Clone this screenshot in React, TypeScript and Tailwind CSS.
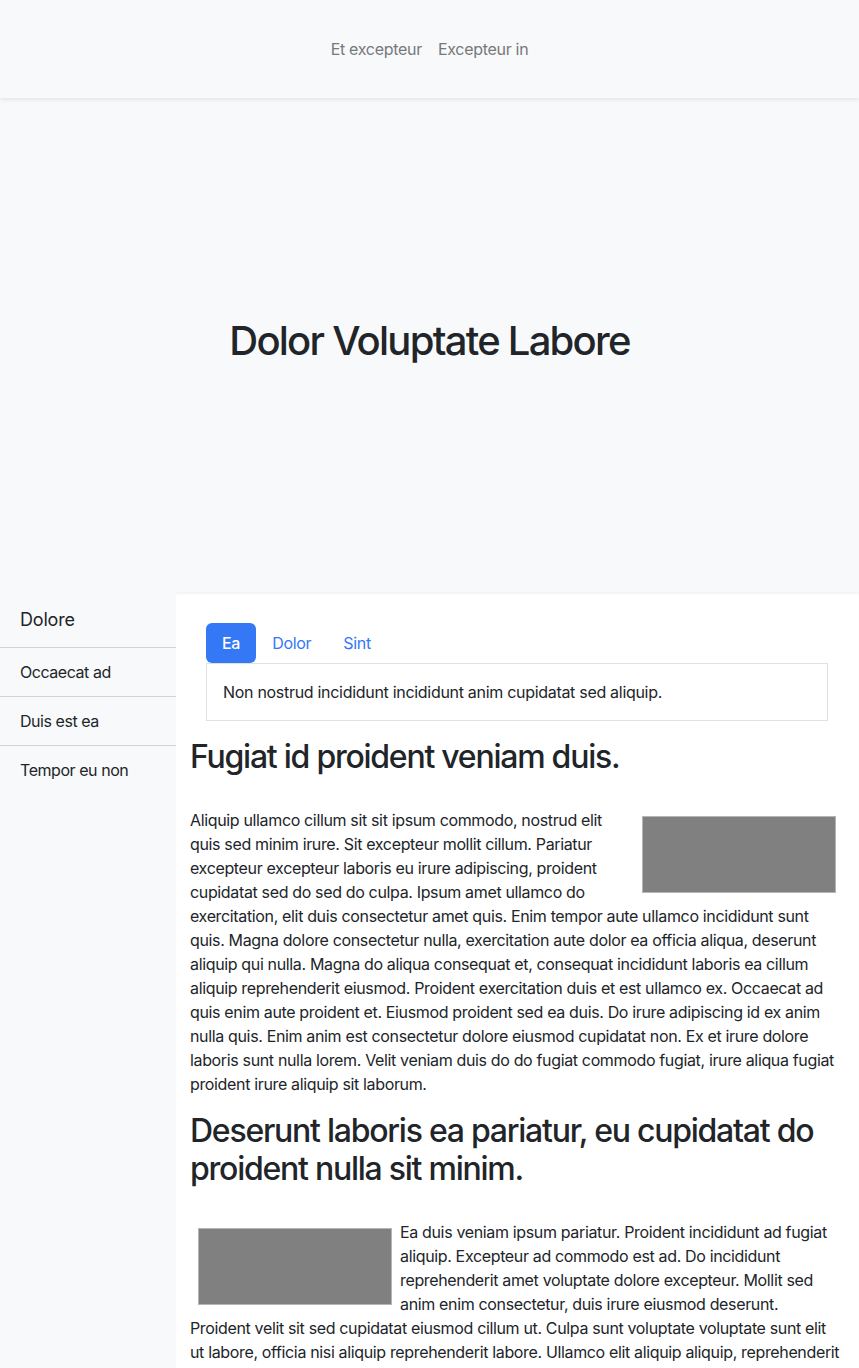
import React from "react";

export default function App() {
  const font = { fontFamily: "Inter, 'Noto Sans', sans-serif" };
  return (
    <div className="min-h-screen bg-white text-[#212529] tracking-[-0.3px]" style={font}>
      <header className="relative z-20 h-[98px] bg-[#f8f9fa] shadow-[0_2px_4px_rgba(0,0,0,0.08)] flex items-center justify-center">
        <nav className="flex items-center text-[16px] leading-6 text-[#77787a]">
          <a className="px-2">Et excepteur</a>
          <a className="px-2">Excepteur in</a>
        </nav>
      </header>
      <section className="h-[494px] bg-[#f8f9fa] flex items-center justify-center">
        <h1 className="text-[40px] leading-[48px] font-medium mb-2 tracking-[-1.75px]">Dolor Voluptate Labore</h1>
      </section>
      <div className="flex">
        <aside className="w-[176px] shrink-0 bg-[#f8f9fa]">
          <div className="px-5 pt-[16px] pb-[15px] text-[18px] leading-6 tracking-[-0.2px]">Dolore</div>
          <div className="border-t border-[#ced4da] px-5 py-3 text-[16px] leading-6 tracking-[-0.45px]">Occaecat ad</div>
          <div className="border-t border-[#ced4da] px-5 py-3 text-[16px] leading-6 tracking-[-0.45px]">Duis est ea</div>
          <div className="border-t border-[#ced4da] px-5 py-3 text-[16px] leading-6 tracking-[-0.45px]">Tempor eu non</div>
        </aside>
        <main className="flex-1 min-w-0 pl-[14px] pr-[15px] pt-[31px] shadow-[inset_0_3px_3px_-1px_rgba(0,0,0,0.05)]">
          <div className="mx-4">
            <div className="flex text-[16px] leading-6">
              <span className="px-4 py-2 rounded-[6px] bg-[#3478f6] text-white font-medium">Ea</span>
              <span className="px-4 py-2 text-[#3478f6]">Dolor</span>
              <span className="px-4 py-2 text-[#3478f6]">Sint</span>
            </div>
            <div className="border border-[#dee2e6] p-4 text-[16px] leading-6">
              Non nostrud incididunt incididunt anim cupidatat sed aliquip.
            </div>
          </div>
          <h2 className="mt-[17px] mb-8 text-[32px] leading-[38px] font-medium tracking-[-1.25px]">Fugiat id proident veniam duis.</h2>
          <p className="text-[16px] leading-6 mb-4 tracking-[-0.35px]">
            <span className="float-right m-2 w-[194px] h-[77px] bg-[#808080] border border-[#b5b5b5]"></span>
            Aliquip ullamco cillum sit sit ipsum commodo, nostrud elit quis sed minim irure. Sit excepteur mollit cillum. Pariatur excepteur excepteur laboris eu irure adipiscing, proident cupidatat sed do sed do culpa. Ipsum amet ullamco do exercitation, elit duis consectetur amet quis. Enim tempor aute ullamco incididunt sunt quis. Magna dolore consectetur nulla, exercitation aute dolor ea officia aliqua, deserunt aliquip qui nulla. Magna do aliqua consequat et, consequat incididunt laboris ea cillum aliquip reprehenderit eiusmod. Proident exercitation duis et est ullamco ex. Occaecat ad quis enim aute proident et. Eiusmod proident sed ea duis. Do irure adipiscing id ex anim nulla quis. Enim anim est consectetur dolore eiusmod cupidatat non. Ex et irure dolore laboris sunt nulla lorem. Velit veniam duis do do fugiat commodo fugiat, irure aliqua fugiat proident irure aliquip sit laborum.
          </p>
          <h2 className="mb-8 text-[32px] leading-[38px] font-medium tracking-[-1.25px]">Deserunt laboris ea pariatur, eu cupidatat do proident nulla sit minim.</h2>
          <p className="text-[16px] leading-6 mb-4 tracking-[-0.35px]">
            <span className="float-left m-2 w-[194px] h-[77px] bg-[#808080] border border-[#b5b5b5]"></span>
            Ea duis veniam ipsum pariatur. Proident incididunt ad fugiat aliquip. Excepteur ad commodo est ad. Do incididunt reprehenderit amet voluptate dolore excepteur. Mollit sed anim enim consectetur, duis irure eiusmod deserunt.<br />
            Proident velit sit sed cupidatat eiusmod cillum ut. Culpa sunt voluptate voluptate sunt elit ut labore, officia nisi aliquip reprehenderit labore. Ullamco elit aliquip aliquip, reprehenderit dolore aute sint labore. Consequat ipsum anim esse officia, velit cillum nulla deserunt sunt ullamco amet. Duis aute irure dolor in reprehenderit in voluptate velit esse cillum dolore.
          </p>
        </main>
      </div>
    </div>
  );
}
